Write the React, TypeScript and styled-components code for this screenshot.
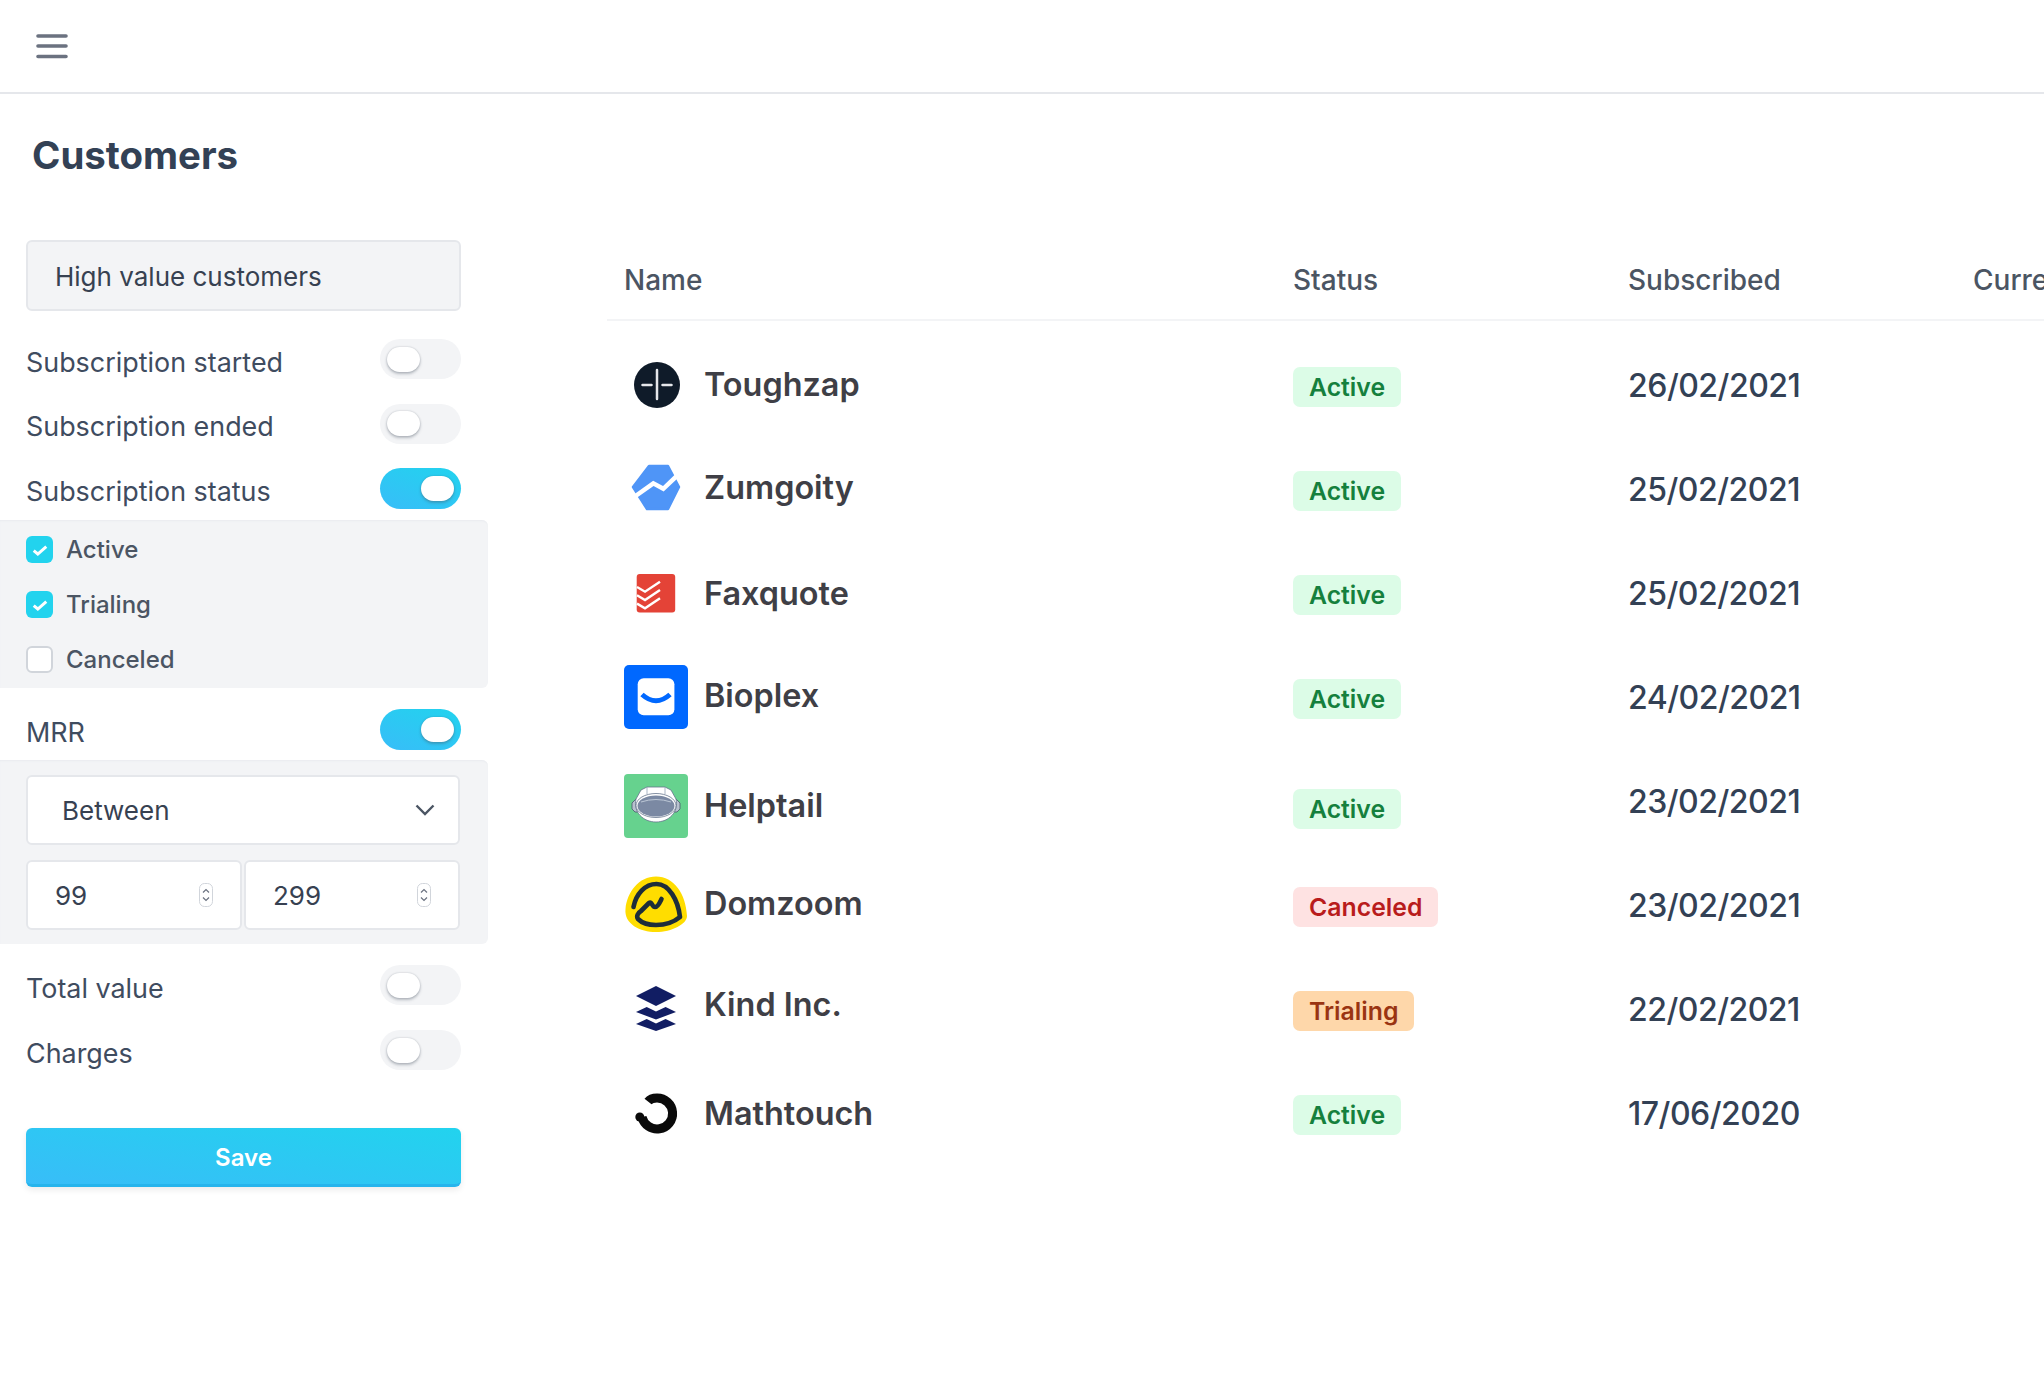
import React from "react";
import styled, { createGlobalStyle } from "styled-components";

const Global = createGlobalStyle`
  html, body { margin: 0; padding: 0; background: #fff; overflow: hidden; }
  body { font-family: Inter, "Liberation Sans", sans-serif; color: #374151; width: 2044px; height: 1400px; }
  * { box-sizing: border-box; }
`;

const Page = styled.div`width: 2044px; height: 1400px; overflow: hidden; display: flex; flex-direction: column;`;
const TopBar = styled.header`height: 94px; flex: none; border-bottom: 2px solid #e5e7eb; padding: 33px 0 0 36px;`;
const MenuIcon = styled.svg`display: block; width: 32px; height: 26px; color: #6b7280;`;
const Content = styled.div`display: flex; flex: 1; min-height: 0;`;
const Sidebar = styled.aside`width: 488px; flex: none; display: flex; flex-direction: column;`;
const Title = styled.h1`margin: 39px 0 63px 32px; font-size: 38.4px; line-height: 44px; font-weight: 700; color: #334155;`;
const NameField = styled.div`
  margin: 0 27px 16px 26px; height: 71px; background: #f3f4f6; border: 2px solid #e5e7eb; border-radius: 6px;
  padding: 2px 0 0 27px; display: flex; align-items: center; font-size: 26px; color: #374151;
`;
const FilterRow = styled.div<{ $h?: number; $top?: number }>`
  height: ${p => p.$h ?? 64.6}px; padding: ${p => p.$top ?? 0}px 27px 0 26px; display: flex; align-items: center; justify-content: space-between;
`;
const FilterLabel = styled.span`font-size: 26.9px; color: #3f4c5f; margin-top: 5px;`;
const Toggle = styled.div<{ $on?: boolean }>`
  width: 81px; height: ${p => (p.$on ? 41 : 40)}px; border-radius: 21px; display: flex; align-items: center; padding: 0 7px;
  justify-content: ${p => (p.$on ? "flex-end" : "flex-start")};
  background: ${p => (p.$on ? "linear-gradient(20deg, #38bdf8, #22d3ee)" : "#f3f4f6")};
`;
const Knob = styled.div`width: 33px; height: 25px; border-radius: 13px; background: #fff; box-shadow: 0 2px 3px rgba(75,85,99,.35), 0 0 2px rgba(75,85,99,.3);`;
const Panel = styled.div<{ $pad: string }>`
  width: 488px; background: #f3f4f6; border-radius: 0 6px 6px 0; padding: ${p => p.$pad}; box-shadow: inset 0 2px 2px -1px #e9ebef;
`;
const CheckRow = styled.div`height: 55px; display: flex; align-items: center; gap: 13px; font-size: 24px; font-weight: 500; color: #4b5563;`;
const CheckBox = styled.div<{ $on?: boolean }>`
  width: 27px; height: 27px; border-radius: 6px; display: flex; align-items: center; justify-content: center;
  background: ${p => (p.$on ? "#22d3ee" : "#fff")}; border: ${p => (p.$on ? "none" : "2px solid #d1d5db")};
`;
const SelectBox = styled.div`
  height: 70px; background: #fff; border: 2px solid #e5e7eb; border-radius: 6px; display: flex; align-items: center;
  justify-content: space-between; padding: 0 23px 0 34px; font-size: 26px; color: #374151;
`;
const NumberRow = styled.div`display: flex; gap: 2px; margin-top: 15px;`;
const NumberBox = styled.div`
  flex: 1; height: 70px; background: #fff; border: 2px solid #e5e7eb; border-radius: 6px; display: flex; align-items: center;
  justify-content: space-between; padding: 0 27px 0 27px; font-size: 26px; color: #374151;
`;
const SaveButton = styled.button`
  margin: 46px 27px 0 26px; height: 59px; padding: 3px 0 0; border: none; border-bottom: 3px solid #26b4ec; border-radius: 6px; color: #fff;
  background: linear-gradient(10deg, #38bdf8, #22d3ee); font: 600 24px Inter, sans-serif; box-shadow: 0 3px 6px rgba(0,0,0,.08);
`;
const Main = styled.main`margin: 146px 0 0 119px; width: 1437px; overflow: hidden;`;
const RowGrid = styled.div`display: grid; grid-template-columns: 669px 335px 345px 200px; padding-left: 17px; align-items: center; white-space: nowrap;`;
const HeadRow = styled(RowGrid)`height: 81px; border-bottom: 2px solid #f3f4f6; font-size: 28px; font-weight: 500; color: #4b5563; margin-bottom: 12px;`;
const BodyRow = styled(RowGrid)`height: 104px;`;
const NameCell = styled.div<{ $shift: number }>`display: flex; align-items: center; gap: 16px; margin-top: ${p => p.$shift}px;`;
const LogoBox = styled.div`width: 64px; height: 64px; flex: none;`;
const LogoSvg = styled.svg`display: block; width: 64px; height: 64px;`;
const CustomerName = styled.span<{ $nudge: number }>`font-size: 32.4px; font-weight: 600; color: #3f3f46; margin-top: ${p => p.$nudge}px;`;
const tones = {
  Active: ["#dcfce7", "#15803d"],
  Canceled: ["#fee2e2", "#b91c1c"],
  Trialing: ["#fed7aa", "#9a3412"],
} as const;
const Badge = styled.span<{ $s: keyof typeof tones; $shift: number }>`
  justify-self: start; height: 40px; padding: 0 16px; border-radius: 7px; display: inline-flex; align-items: center; font-size: 24.8px; font-weight: 600;
  background: ${p => tones[p.$s][0]}; color: ${p => tones[p.$s][1]}; margin-top: ${p => p.$shift}px;
`;
const DateText = styled.span`font-size: 32px; font-weight: 500; letter-spacing: -0.5px; color: #334155;`;

const Toughzap = () => (
  <LogoSvg viewBox="0 0 64 64">
    <circle cx="33" cy="32" r="23" fill="#0f1b29" />
    <path d="M33 17v29M18.500 32h9M38.500 32h9" stroke="#e5e7eb" strokeWidth="2.500" strokeLinecap="round" />
  </LogoSvg>
);
const Zumgoity = () => (
  <LogoSvg viewBox="0 0 64 64">
    <path d="M25 9h19l11 21-11 22H23L9 30z" fill="#4f95f7" stroke="#4f95f7" strokeWidth="2.500" strokeLinejoin="round" />
    <path d="M8 41.500L29.300 26.300 39.300 31.800 58 14" fill="none" stroke="#fff" strokeWidth="4.500" />
  </LogoSvg>
);
const Faxquote = () => (
  <LogoSvg viewBox="0 0 64 64">
    <rect x="12.700" y="13" width="38.500" height="38.500" rx="3" fill="#e44337" />
    <g fill="none" stroke="#fff" strokeWidth="2.400">
      <path d="M13 26l8 4.700 15-10" />
      <path d="M13 34.300l8 4.700 15-10" />
      <path d="M13 42.600l8 4.700 15-10" />
    </g>
  </LogoSvg>
);
const Bioplex = () => (
  <LogoSvg viewBox="0 0 64 64">
    <rect width="64" height="64" rx="5" fill="#0068ff" />
    <rect x="13.700" y="13.300" width="36.700" height="37" rx="6" fill="#fff" />
    <path d="M18 29.500Q32 42 46 29.500" fill="none" stroke="#0068ff" strokeWidth="5" />
  </LogoSvg>
);
const Helptail = () => (
  <LogoSvg viewBox="0 0 64 64">
    <rect width="64" height="64" rx="4" fill="#66d28e" />
    <path d="M8 29l4-4h40l4 4v6l-3 3H11l-3-3z" fill="#b8c1ce" stroke="#475569" strokeWidth=".8" />
    <path d="M23 13h18l6 3 5 9c3 13-7 23-20 23S9 38 12 25l5-9z" fill="#fff" stroke="#64748b" strokeWidth=".8" />
    <path d="M23 13v7M41 13v7" stroke="#94a3b8" strokeWidth=".8" />
    <ellipse cx="32" cy="31.500" rx="20" ry="12" fill="#fff" stroke="#64748b" strokeWidth=".8" />
    <ellipse cx="32" cy="32" rx="18.500" ry="10.500" fill="#7b89a3" />
    <path d="M17 28q15-5 30 0" fill="none" stroke="#cbd5e1" strokeWidth=".8" />
  </LogoSvg>
);
const Domzoom = () => (
  <LogoSvg viewBox="0 0 64 64">
    <path d="M1.500 37C3 20 15 4.500 32 4.500 50 4.500 62 22 63 44 63 52 48 60 32 60 16 60 0 52 1.500 37Z" fill="#ffdd00" />
    <path d="M9.500 35C12 22 21 12 32.500 12 45 12 54 28 56 45 50 50 42 53 32 53 24 53 18 51 14 47 12 44 14 41 17 39L25 31C28 29 28 35 31 35 34 35 36 30 37.500 27" fill="none" stroke="#1d2d3a" strokeWidth="4.600" strokeLinecap="round" strokeLinejoin="round" />
  </LogoSvg>
);
const KindInc = () => (
  <LogoSvg viewBox="0 0 64 64">
    <g fill="#111d63">
      <path d="M32 9l20 10-20 10-20-10z" />
      <path d="M12 35l10.700-5L32 34.600 41.600 30 52 35 32 42.500z" />
      <path d="M12 47l10.700-5L32 46.600 41.600 42 52 47 32 54z" />
    </g>
  </LogoSvg>
);
const Mathtouch = () => (
  <LogoSvg viewBox="0 0 64 64">
    <path d="M24 20.500C26 18 29.500 17 33 17A15.500 15.500 0 1 1 18 36" fill="none" stroke="#0a0a0a" strokeWidth="9" />
    <circle cx="15.800" cy="36" r="4.500" fill="#0a0a0a" />
  </LogoSvg>
);

const Spinner = () => (
  <svg width="14" height="24" viewBox="0 0 14 24" style={{ display: "block" }}>
    <rect x=".5" y=".5" width="13" height="23" rx="5" fill="#fff" stroke="#d1d5db" />
    <path d="M4 9.500l3-3 3 3M4 14.500l3 3 3-3" fill="none" stroke="#6b7280" strokeWidth="1.200" />
  </svg>
);
const Check = () => (
  <svg width="20" height="16" viewBox="0 0 17 14" style={{ display: "block" }}>
    <path d="M3 7.500l3.600 3L14 4" fill="none" stroke="#fff" strokeWidth="2.600" />
  </svg>
);

const rows = [
  { name: "Toughzap", status: "Active", date: "26/02/2021", Logo: Toughzap, shift: 0, nudge: -1, badge: 4 },
  { name: "Zumgoity", status: "Active", date: "25/02/2021", Logo: Zumgoity, shift: 0, nudge: -4, badge: 4 },
  { name: "Faxquote", status: "Active", date: "25/02/2021", Logo: Faxquote, shift: 0, nudge: 0, badge: 4 },
  { name: "Bioplex", status: "Active", date: "24/02/2021", Logo: Bioplex, shift: 0, nudge: -4, badge: 4 },
  { name: "Helptail", status: "Active", date: "23/02/2021", Logo: Helptail, shift: 10, nudge: -2, badge: 16 },
  { name: "Domzoom", status: "Canceled", date: "23/02/2021", Logo: Domzoom, shift: -2, nudge: -2, badge: 4 },
  { name: "Kind Inc.", status: "Trialing", date: "22/02/2021", Logo: KindInc, shift: 0, nudge: -9, badge: 4 },
  { name: "Mathtouch", status: "Active", date: "17/06/2020", Logo: Mathtouch, shift: 0, nudge: 0, badge: 4 },
] as const;

export default function App() {
  return (
    <Page>
      <Global />
      <TopBar>
        <MenuIcon viewBox="0 0 32 26">
          <path d="M2 3h28M2 13h28M2 23.500h28" stroke="currentColor" strokeWidth="3.600" strokeLinecap="round" />
        </MenuIcon>
      </TopBar>
      <Content>
        <Sidebar>
          <Title>Customers</Title>
          <NameField>High value customers</NameField>
          <FilterRow><FilterLabel>Subscription started</FilterLabel><Toggle><Knob /></Toggle></FilterRow>
          <FilterRow><FilterLabel>Subscription ended</FilterLabel><Toggle><Knob /></Toggle></FilterRow>
          <FilterRow $h={64}><FilterLabel>Subscription status</FilterLabel><Toggle $on><Knob /></Toggle></FilterRow>
          <Panel $pad="2px 0 1px 26px">
            <CheckRow><CheckBox $on><Check /></CheckBox>Active</CheckRow>
            <CheckRow><CheckBox $on><Check /></CheckBox>Trialing</CheckRow>
            <CheckRow><CheckBox />Canceled</CheckRow>
          </Panel>
          <FilterRow $h={72} $top={11}><FilterLabel>MRR</FilterLabel><Toggle $on><Knob /></Toggle></FilterRow>
          <Panel $pad="15px 28px 14px 26px">
            <SelectBox>
              Between
              <svg width="20" height="12" viewBox="0 0 20 12" style={{ display: "block" }}>
                <path d="M1.500 1.500L10 10l8.500-8.500" fill="none" stroke="#4b5563" strokeWidth="2.400" />
              </svg>
            </SelectBox>
            <NumberRow>
              <NumberBox>99<Spinner /></NumberBox>
              <NumberBox>299<Spinner /></NumberBox>
            </NumberRow>
          </Panel>
          <FilterRow $h={9} />
          <FilterRow><FilterLabel>Total value</FilterLabel><Toggle><Knob /></Toggle></FilterRow>
          <FilterRow><FilterLabel>Charges</FilterLabel><Toggle><Knob /></Toggle></FilterRow>
          <SaveButton>Save</SaveButton>
        </Sidebar>
        <Main>
          <HeadRow>
            <span>Name</span>
            <span>Status</span>
            <span>Subscribed</span>
            <span>Current plan</span>
          </HeadRow>
          {rows.map(r => (
            <BodyRow key={r.name}>
              <NameCell $shift={r.shift}>
                <LogoBox><r.Logo /></LogoBox>
                <CustomerName $nudge={r.nudge}>{r.name}</CustomerName>
              </NameCell>
              <Badge $s={r.status} $shift={r.badge}>{r.status}</Badge>
              <DateText>{r.date}</DateText>
            </BodyRow>
          ))}
        </Main>
      </Content>
    </Page>
  );
}
